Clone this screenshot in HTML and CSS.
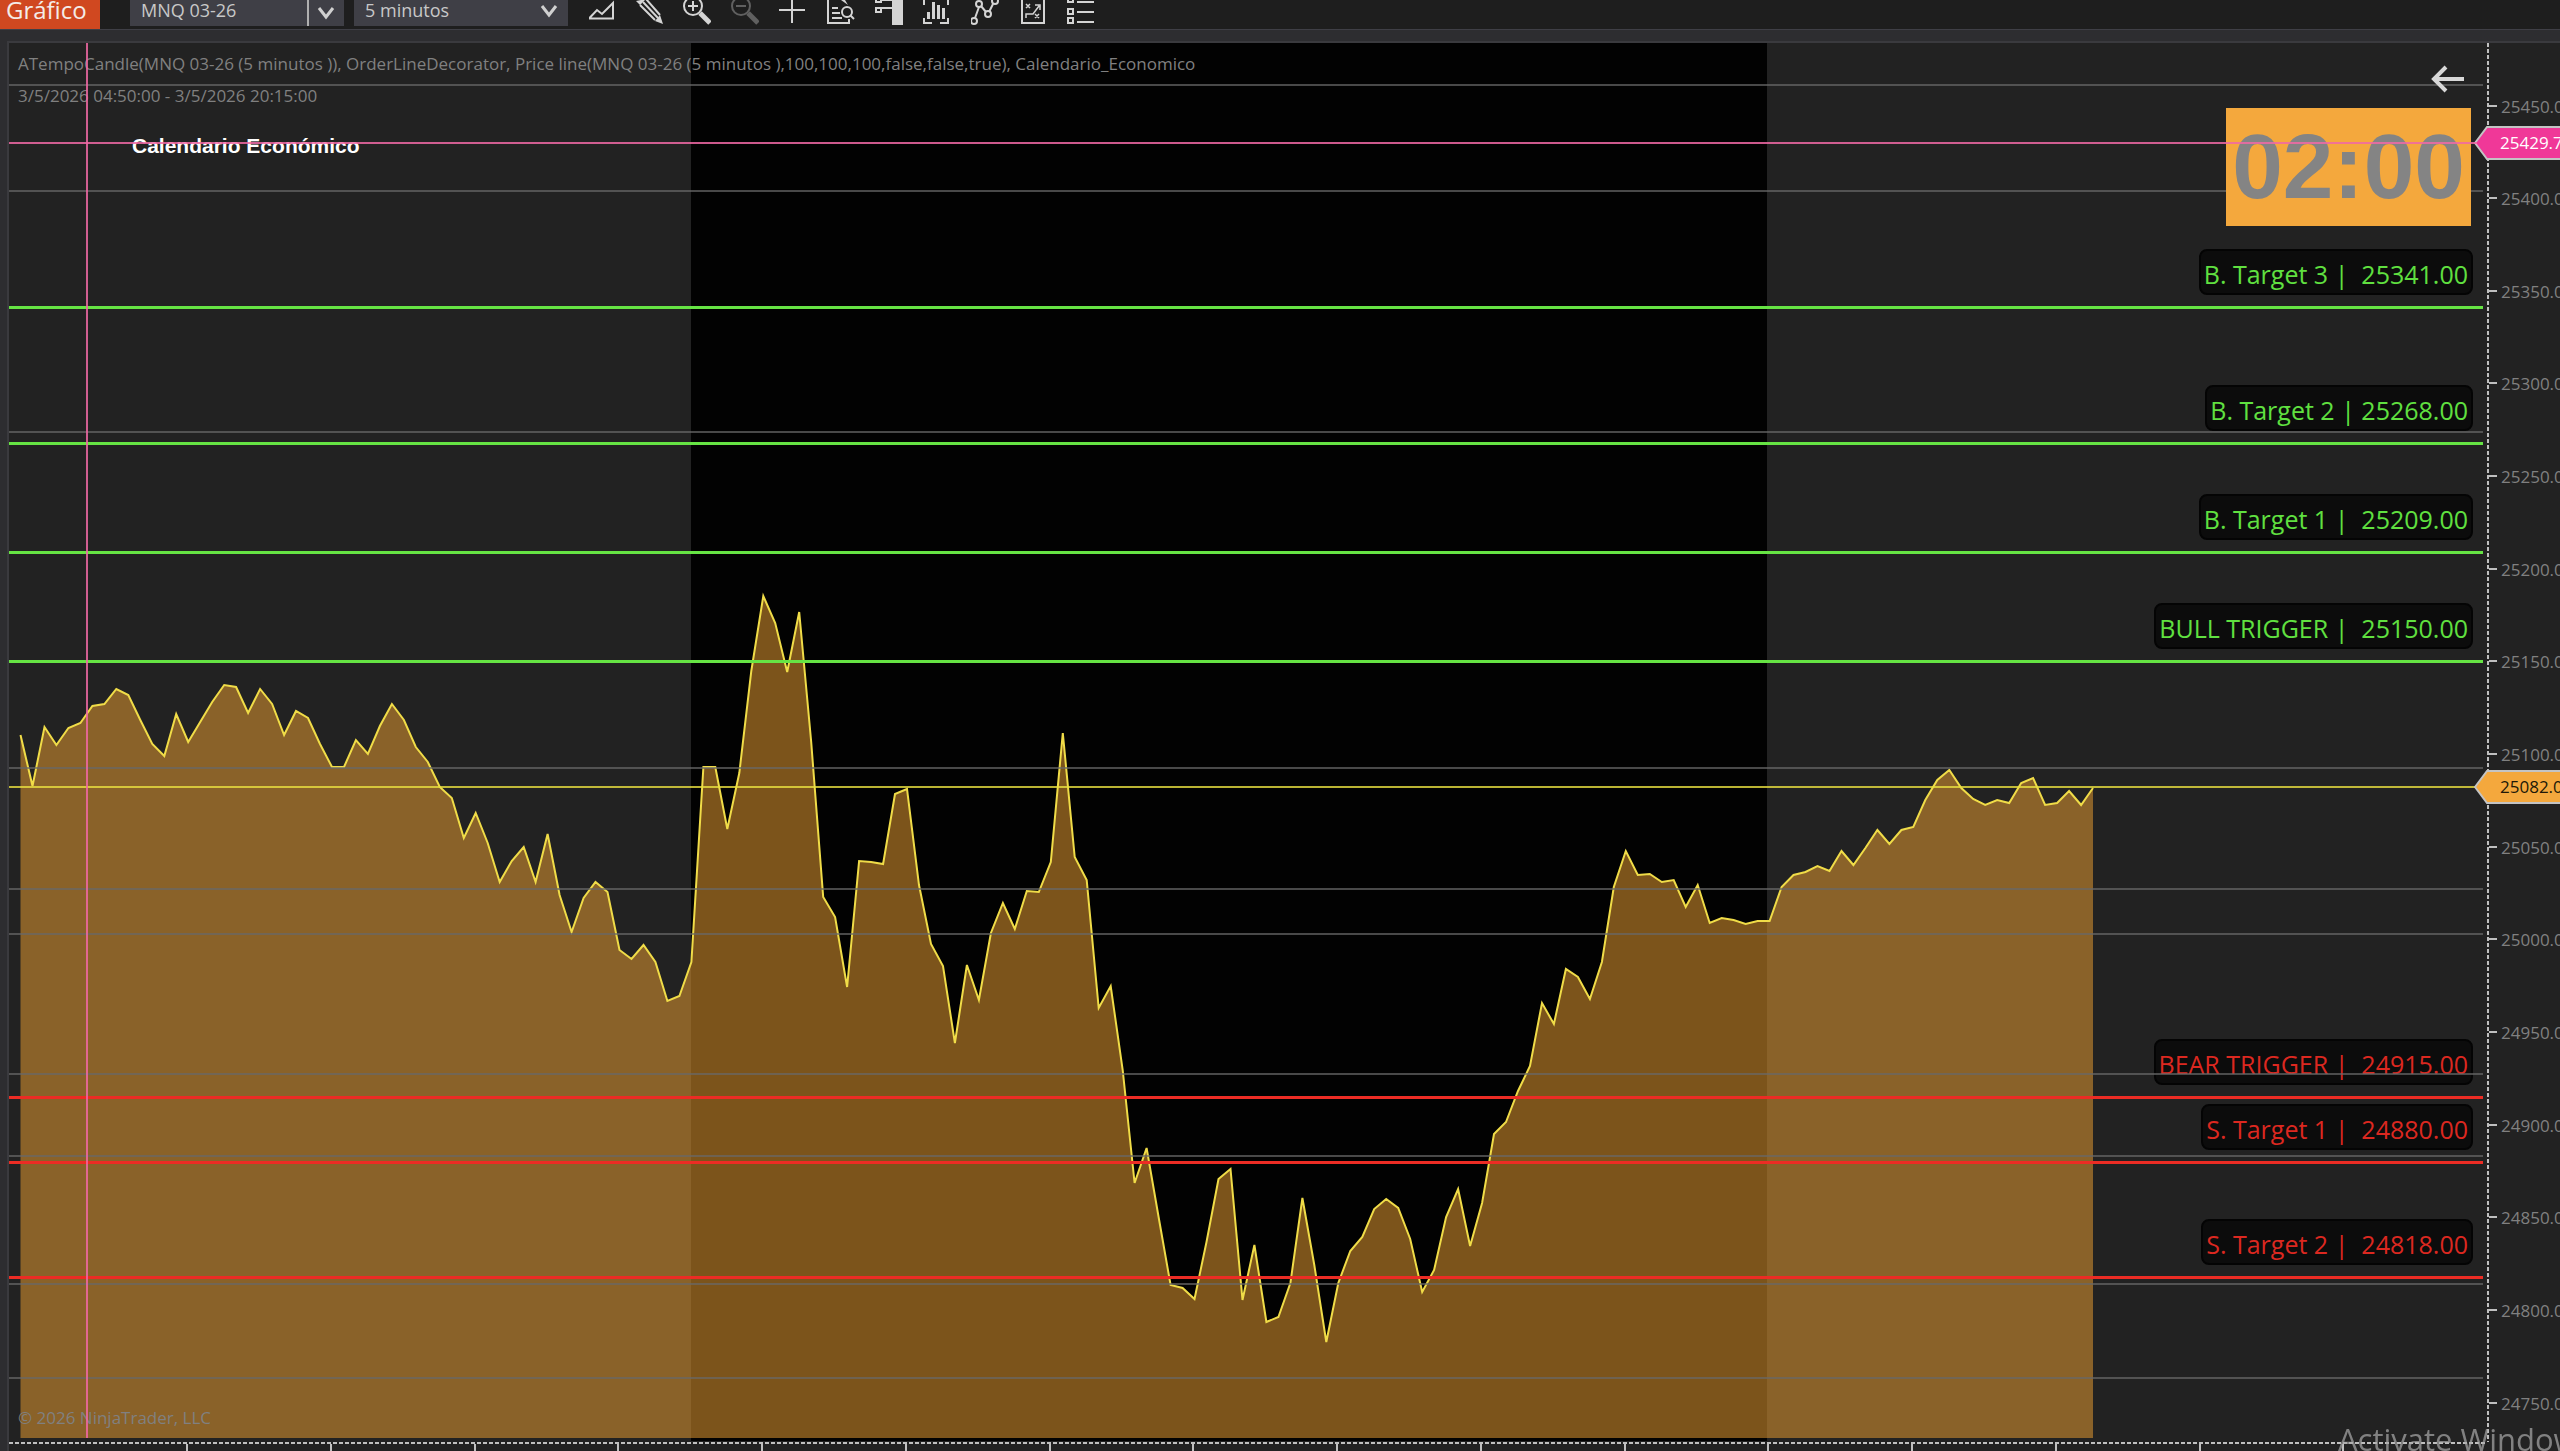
FILE: index.html
```html
<!DOCTYPE html>
<html lang="es">
<head>
    <meta charset="UTF-8">
    <meta name="viewport" content="width=device-width, initial-scale=1.0">
    <title>Gráfico - MNQ 03-26</title>
    <link rel="stylesheet" href="styles.css">
</head>
<body>
    <header class="toolbar">
        <h1 class="title">Gráfico</h1>
        <div class="combo">
            <input type="text" class="combo-text" value="MNQ 03-26" aria-label="Instrumento">
            <button class="combo-arrow" aria-label="Elegir instrumento">
                <svg width="18" height="14" viewBox="0 0 18 14"><path d="M2 2l7 9 7-9"/></svg>
            </button>
        </div>
        <div class="combo interval">
            <select class="combo-select" aria-label="Intervalo">
                <option>5 minutos</option>
                <option>15 minutos</option>
            </select>
            <svg class="select-arrow" width="18" height="14" viewBox="0 0 18 14"><path d="M2 2l7 9 7-9"/></svg>
        </div>
        <nav class="tools">
            <button aria-label="Estilo"><svg viewBox="0 0 28 30"><path d="M3 18.500v-1L10 10l5 4L26 3v15.500z"/></svg></button>
            <button aria-label="Dibujar"><svg viewBox="0 0 28 30"><path d="M5 5l15 15M8 2l15 16M11-1l14 16"/><path class="fill" d="M28 24l-8-3 5-6zM1 1l4 4 6-6z"/></svg></button>
            <button aria-label="Acercar"><svg viewBox="0 0 28 30"><circle cx="10" cy="6" r="9"/><path d="M10 1v10M5 6h10"/><path class="thick" d="M17 13l10 10"/></svg></button>
            <button aria-label="Alejar" disabled><svg viewBox="0 0 28 30"><circle cx="10" cy="6" r="9"/><path d="M5 6h10"/><path class="thick" d="M17 13l10 10"/></svg></button>
            <button aria-label="Cursor"><svg viewBox="0 0 28 30"><path d="M0 10h26M13-3v26"/></svg></button>
            <button aria-label="Datos"><svg viewBox="0 0 28 30"><path d="M1-2v25h21v-4M5 8h6M5 13h8M5 18h10"/><circle cx="20" cy="12" r="5"/><path d="M23 15l4 4"/><path class="fill" d="M14 0h4l3 5z"/></svg></button>
            <button aria-label="Panel"><svg viewBox="0 0 28 30"><path d="M1-2h5v4H1zM1 8h5v4H1zM6 8h11M6 0h11"/><path class="fill" d="M17 0h11v25H17z"/></svg></button>
            <button aria-label="Operar"><svg viewBox="0 0 28 30"><path d="M1 0v5M25 0v5M1 18v5h8M17 23h8v-5"/><path class="fill" d="M4 12h3v7H4zM9 2h3v17H9zM14 5h3v14h-3zM19 8h3v11h-3z"/></svg></button>
            <button aria-label="Indicadores"><svg viewBox="0 0 28 30"><path d="M4 18L8 7M10 6l5 6M18 12l4-8"/><circle cx="3" cy="21" r="3"/><circle cx="8" cy="4" r="3"/><circle cx="17" cy="14" r="3"/><circle cx="24" cy="1" r="3"/></svg></button>
            <button aria-label="Estrategias"><svg viewBox="0 0 28 30"><path d="M3-2v25h22V-2z"/><path class="thin" d="M7 4l4 4M11 4l-4 4M16 14l4 4M20 14l-4 4M7 18v-4h7l6-8M16 5h5v5"/></svg></button>
            <button aria-label="Propiedades"><svg viewBox="0 0 28 30"><path d="M1-2h5v4H1zM1 9h5v5H1zM1 18h5v5H1zM10 2h17M10 12h17M10 22h17"/></svg></button>
        </nav>
    </header>

    <main class="chart">
        <section class="plot" id="plot">
            <!-- x 9..2487, y 43..1442 -->
            <svg class="series" viewBox="9 43 2478 1399" preserveAspectRatio="none">
                <rect class="session" x="691" y="43" width="1076" height="1398"/>
                <polygon class="area" id="area"/>
                <polyline class="price" id="price"/>
            </svg>
            <div class="info">
                <p>ATempoCandle(MNQ 03-26 (5 minutos )), OrderLineDecorator, Price line(MNQ 03-26 (5 minutos ),100,100,100,false,false,true), Calendario_Economico</p>
                <p>3/5/2026 04:50:00 - 3/5/2026 20:15:00</p>
                <h2>Calendario Económico</h2>
            </div>
            <div class="timer">02:00</div>
            <button class="back" aria-label="Volver">
                <svg width="34" height="28" viewBox="0 0 34 28"><path d="M33 14H3M15 2L3 14l12 12"/></svg>
            </button>
            <div class="cross-x"></div>
            <p class="copyright">© 2026 NinjaTrader, LLC</p>
        </section>
        <aside class="price-axis" id="price-axis"></aside>
        <footer class="time-axis" id="time-axis"></footer>
    </main>
    <div class="watermark">Activate Windows</div>

    <script>
        const TOP = 43, HEIGHT = 1399, LEFT = 9, WIDTH = 2478;

        // one close every 5 minutes
        const closes = [
            735, 786, 727, 745, 728, 723, 706, 704, 689, 695, 720, 744, 756, 714, 742, 722, 702, 685, 687, 713,
            689, 704, 735, 711, 718, 744, 767, 767, 740, 754, 726, 704, 720, 747, 762, 787, 798, 838, 813, 843,
            882, 861, 847, 882, 834, 895, 932, 898, 882, 892, 950, 959, 945, 962, 1001, 996, 962, 767, 767, 829,
            773, 671, 596, 623, 672, 612, 742, 897, 917, 987, 861, 862, 864, 794, 789, 885, 944, 966, 1043, 965,
            1000, 933, 903, 929, 891, 892, 862, 733, 857, 880, 1008, 986, 1070, 1183, 1148, 1217, 1285, 1288, 1299, 1242,
            1179, 1169, 1300, 1245, 1322, 1317, 1283, 1198, 1265, 1342, 1283, 1251, 1237, 1209, 1199, 1208, 1239, 1292, 1270, 1217,
            1189, 1246, 1203, 1134, 1122, 1091, 1066, 1003, 1024, 969, 977, 999, 962, 887, 851, 875, 874, 882, 880, 907,
            885, 923, 918, 920, 924, 921, 921, 887, 875, 872, 866, 871, 851, 865, 848, 830, 844, 830, 827, 800,
            780, 770, 788, 799, 805, 800, 803, 783, 778, 805, 803, 791, 805, 788
        ];
        const levels = [
            { name: "B. Target 3 |  ", price: 25341, type: "bull" },
            { name: "B. Target 2 | ", price: 25268, type: "bull" },
            { name: "B. Target 1 |  ", price: 25209, type: "bull" },
            { name: "BULL TRIGGER |  ", price: 25150, type: "bull" },
            { name: "BEAR TRIGGER |  ", price: 24915, type: "bear" },
            { name: "S. Target 1 |  ", price: 24880, type: "bear" },
            { name: "S. Target 2 |  ", price: 24818, type: "bear" }
        ];
        const grid = [85, 191, 432, 768, 889, 934, 1074, 1156, 1284, 1378];

        const plot = document.getElementById("plot");
        const axis = document.getElementById("price-axis");
        const timeAxis = document.getElementById("time-axis");

        function priceY(price) {
            return Math.round(105.5 + (25450 - price) * 1.8532);
        }

        function percent(y) {
            return (y - TOP) / HEIGHT * 100 + "%";
        }

        function add(parent, className, top, html) {
            let el = document.createElement("div");
            el.className = className;
            el.style.top = percent(top);
            el.innerHTML = html || "";
            parent.appendChild(el);
        }

        let points = closes.map((y, i) => (20.5 + i * 11.98).toFixed(1) + "," + y).join(" ");
        document.getElementById("price").setAttribute("points", points);
        document.getElementById("area").setAttribute("points", "20.5,1438 " + points + " 2093,1438");

        grid.forEach(y => add(plot, "grid-line", y));
        levels.forEach(level => {
            let y = priceY(level.price);
            add(plot, "level-line " + level.type, y);
            add(plot, "level-label " + level.type, y, level.name + level.price.toFixed(2));
        });
        add(plot, "last-line", 787);
        add(plot, "cross-y", 143);

        for (let price = 25450; price >= 24750; price -= 50) {
            add(axis, "tick", priceY(price), price.toFixed(2));
        }
        let shape = '<svg width="100" height="34" viewBox="0 0 100 34"><path d="M1 17L13 1h100v32H13z"/></svg>';
        add(axis, "tag cursor", 143, shape + "<span>25429.75</span>");
        add(axis, "tag last", 787, shape + "<span>25082.00</span>");

        for (let i = 0; i < 16; i++) {
            let mark = document.createElement("i");
            mark.style.left = (186 + i * 143.75 - LEFT) / WIDTH * 100 + "%";
            timeAxis.appendChild(mark);
        }
    </script>
</body>
</html>
```

FILE: styles.css
```css
* {
    box-sizing: border-box;
}
body {
    margin: 0;
    height: 100vh;
    display: flex;
    flex-direction: column;
    overflow: hidden;
    background: #2d2d30;
    font-family: "Open Sans", "Noto Sans", sans-serif;
    color: #808080;
}
h1, h2, p {
    margin: 0;
    font-weight: normal;
}
button, input, select {
    font-family: inherit;
    border: none;
    border-radius: 0;
    padding: 0;
    outline: none;
}
svg {
    display: block;
    fill: none;
}

/* toolbar */
.toolbar {
    display: flex;
    align-items: flex-start;
    height: 30px;
    background: #1e1e1e;
    border-bottom: 1px solid #3f3f46;
}
.title {
    width: 100px;
    height: 29px;
    margin-right: 30px;
    padding-left: 6px;
    background: #d04820;
    color: #f4ece8;
    font-size: 24px;
    line-height: 20px;
}
.combo {
    display: flex;
    position: relative;
    width: 214px;
    height: 26px;
    margin-right: 10px;
    background: #3f3f46;
}
.combo-text, .combo-select {
    flex: 1;
    min-width: 0;
    height: 20px;
    padding-left: 11px;
    background: transparent;
    color: #c8c8c8;
    font-size: 18px;
    line-height: 20px;
}
.combo-select {
    appearance: none;
}
.combo-arrow {
    width: 37px;
    height: 26px;
    padding: 4px 8px;
    background: transparent;
    border-left: 2px solid #b0b0b0;
}
.combo path {
    stroke: #d0d0d0;
    stroke-width: 3;
}
.select-arrow {
    position: absolute;
    right: 10px;
    top: 4px;
    pointer-events: none;
}
.tools {
    display: flex;
    gap: 20px;
    margin-left: 9px;
}
.tools button {
    width: 28px;
    height: 29px;
    background: transparent;
}
.tools svg {
    width: 28px;
    height: 30px;
    stroke: #d4d4d4;
    stroke-width: 2;
}
.tools .fill {
    fill: #d4d4d4;
    stroke: none;
}
.tools .thick {
    stroke-width: 5;
}
.tools .thin {
    stroke-width: 1.5;
}
.tools button:disabled svg {
    stroke: #606060;
}

/* chart */
.chart {
    flex: 1;
    display: grid;
    grid-template-columns: 1fr 73px;
    grid-template-rows: 1fr 9px;
    margin-top: 11px;
    margin-left: 7px;
    border-top: 2px solid #3a3a3e;
    border-left: 2px solid #3a3a3e;
    background: #222;
}
.plot {
    position: relative;
}
.series {
    position: absolute;
    width: 100%;
    height: 100%;
}
.session {
    fill: #020202;
}
.area {
    fill: rgba(210, 143, 46, 0.59);
}
.price {
    stroke: #f0dc48;
    stroke-width: 2;
}
.info {
    position: relative;
    padding: 11px 9px;
    font-size: 17px;
    white-space: nowrap;
}
.info p {
    height: 32px;
    line-height: 20px;
}
.info h2 {
    margin-top: 8px;
    margin-left: 114px;
    color: #fff;
    font: bold 21px/40px "Liberation Sans", sans-serif;
}
.grid-line, .level-line, .last-line, .cross-y {
    position: absolute;
    left: 0;
    right: 4px;
    height: 2px;
    margin-top: -1px;
}
.grid-line {
    z-index: 2;
    background: rgba(104, 104, 104, 0.7);
}
.level-line {
    height: 3px;
}
.level-line.bull {
    background: #66e444;
}
.level-line.bear {
    background: #ec2c24;
}
.last-line {
    right: 10px;
    background: rgba(232, 224, 64, 0.8);
}
.cross-y {
    z-index: 4;
    right: 10px;
    background: rgba(240, 104, 164, 0.85);
}
.cross-x {
    position: absolute;
    z-index: 4;
    left: 77px;
    top: 0;
    bottom: 4px;
    width: 2px;
    background: rgba(240, 104, 164, 0.85);
}
.level-label {
    position: absolute;
    right: 14px;
    height: 46px;
    margin-top: -58px;
    padding: 0 3px;
    border: 2px solid #040404;
    border-radius: 8px;
    background: #0c0c0c;
    font-size: 25px;
    line-height: 46px;
    white-space: pre;
}
.level-label.bull {
    color: #60e040;
}
.level-label.bear {
    color: #dc2820;
}
.timer {
    position: absolute;
    z-index: 3;
    top: 65px;
    right: 16px;
    width: 245px;
    height: 118px;
    background: #f4a83d;
    color: #848484;
    font: bold 91px/118px "Liberation Sans", sans-serif;
    text-align: center;
}
.back {
    position: absolute;
    z-index: 3;
    top: 22px;
    right: 22px;
    background: transparent;
}
.back path {
    stroke: #d8d8d8;
    stroke-width: 4;
}
.copyright {
    position: absolute;
    left: 9px;
    bottom: 12px;
    font-size: 17px;
    line-height: 24px;
}

/* axes */
.price-axis {
    position: relative;
    background: repeating-linear-gradient(#c0c0c0 0 4px, #222 4px 6px) left / 2px 100% no-repeat;
}
.tick {
    position: absolute;
    left: 0;
    height: 24px;
    margin-top: -12px;
    padding-left: 14px;
    font-size: 17px;
    line-height: 25px;
}
.tick::before {
    content: "";
    position: absolute;
    left: 2px;
    top: 11px;
    width: 8px;
    border-top: 2px dashed #c0c0c0;
}
.tag {
    position: absolute;
    left: -13px;
    height: 34px;
    margin-top: -17px;
}
.tag path {
    stroke: #c4c4c4;
    stroke-width: 2;
}
.tag span {
    position: absolute;
    left: 26px;
    top: 0;
    font-size: 17px;
    line-height: 34px;
}
.cursor path {
    fill: #f03898;
}
.cursor span {
    color: #fff;
}
.last path {
    fill: #f4a83d;
}
.last span {
    color: #201808;
}
.time-axis {
    position: relative;
    background: repeating-linear-gradient(90deg, #c0c0c0 0 4px, #222 4px 6px) top / 100% 2px no-repeat;
}
.time-axis i {
    position: absolute;
    top: 2px;
    bottom: 0;
    border-left: 2px dashed #c0c0c0;
}
.watermark {
    position: fixed;
    z-index: 5;
    left: calc(100% - 222px);
    bottom: -8px;
    color: rgba(170, 170, 170, 0.7);
    font-size: 31px;
    line-height: 40px;
    white-space: nowrap;
}
```
